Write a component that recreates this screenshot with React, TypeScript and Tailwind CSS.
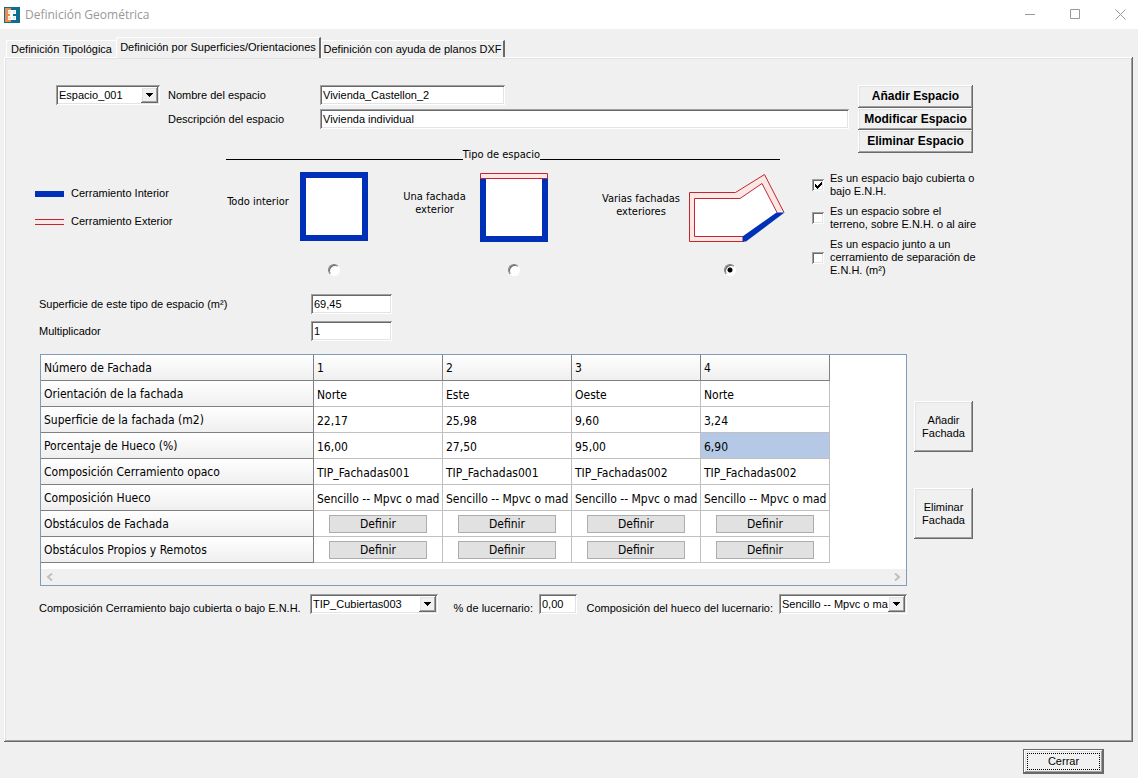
import React, { useState } from 'react';
import clsx from 'clsx';

const SUNKEN =
  'bg-white shadow-[inset_1px_1px_0_#a0a0a0,inset_-1px_-1px_0_#ffffff,inset_2px_2px_0_#696969,inset_-2px_-2px_0_#e3e3e3]';
const RAISED =
  'bg-[#f0f0f0] shadow-[inset_-1px_-1px_0_#696969,inset_1px_1px_0_#ffffff,inset_-2px_-2px_0_#a0a0a0,inset_2px_2px_0_#e3e3e3]';

const TABS = [
  { text: 'Definición Tipológica', width: 'w-[110px]' },
  { text: 'Definición por Superficies/Orientaciones', width: 'w-[205px]' },
  { text: 'Definición con ayuda de planos DXF', width: 'w-[184px]' },
];

const FACHADAS = ['1', '2', '3', '4'];

const ROWS: { label: string; values?: string[] }[] = [
  { label: 'Orientación de la fachada', values: ['Norte', 'Este', 'Oeste', 'Norte'] },
  { label: 'Superficie de la fachada (m2)', values: ['22,17', '25,98', '9,60', '3,24'] },
  { label: 'Porcentaje de Hueco (%)', values: ['16,00', '27,50', '95,00', '6,90'] },
  {
    label: 'Composición Cerramiento opaco',
    values: ['TIP_Fachadas001', 'TIP_Fachadas001', 'TIP_Fachadas002', 'TIP_Fachadas002'],
  },
  {
    label: 'Composición Hueco',
    values: ['Sencillo -- Mpvc o mad', 'Sencillo -- Mpvc o mad', 'Sencillo -- Mpvc o mad', 'Sencillo -- Mpvc o mad'],
  },
  { label: 'Obstáculos de Fachada' },
  { label: 'Obstáculos Propios y Remotos' },
];

const CONDICIONES = [
  { id: 'cubierta', text: 'Es un espacio bajo cubierta o\nbajo E.N.H.' },
  { id: 'terreno', text: 'Es un espacio sobre el\nterreno, sobre E.N.H. o al aire' },
  { id: 'junto', text: 'Es un espacio junto a un\ncerramiento de separación de\nE.N.H. (m²)' },
];

const AppIcon = () => (
  <svg width="16" height="16" viewBox="0 0 16 16" aria-hidden="true">
    <rect width="16" height="16" fill="#0f6e8e" />
    <path d="M1 1h6v14H1z" fill="#ee8a4e" />
    <path d="M4 3h8v4H9v2h3v4H4V9h2V7H4z" fill="#fff" />
    <path d="M4 4h3v2H4zM4 10h3v2H4z" fill="#fbe3d4" />
    <path d="M9 4h2v2H9zM9 10h2v2H9z" fill="#d9ecf2" />
  </svg>
);

const TitleBar = () => (
  <header className="flex h-[29px] items-center justify-between bg-white pl-1">
    <div className="flex items-center gap-[5px]">
      <AppIcon />
      <h1 className="font-['Open_Sans',sans-serif] text-[12px] leading-4 text-[#999999]">Definición Geométrica</h1>
    </div>
    <div className="flex gap-[9px] text-[#999999]">
      <button type="button" aria-label="Minimizar" className="flex h-[26px] w-9 items-center justify-center">
        <svg width="11" height="11" viewBox="0 0 11 11" fill="none" stroke="currentColor">
          <path d="M0 5.5h10" />
        </svg>
      </button>
      <button type="button" aria-label="Maximizar" className="flex h-[26px] w-9 items-center justify-center">
        <svg width="11" height="11" viewBox="0 0 11 11" fill="none" stroke="currentColor">
          <path d="M.5 .5h9v9h-9z" />
        </svg>
      </button>
      <button type="button" aria-label="Cerrar ventana" className="flex h-[26px] w-9 items-center justify-center">
        <svg width="11" height="11" viewBox="0 0 11 11" fill="none" stroke="currentColor">
          <path d="M.5 .5l10 10M10.5 .5l-10 10" />
        </svg>
      </button>
    </div>
  </header>
);

const TextField: React.FC<{ id: string; value: string; className: string }> = ({ id, value, className }) => (
  <input id={id} type="text" defaultValue={value} className={clsx('h-5 px-[3px] outline-none', SUNKEN, className)} />
);

const SelectField: React.FC<{ id: string; value: string; label?: string; className: string }> = ({
  id,
  value,
  label,
  className,
}) => (
  <div className={clsx('relative h-5', SUNKEN, className)}>
    <select
      id={id}
      aria-label={label}
      className="h-5 w-full appearance-none overflow-hidden bg-transparent pr-[19px] pl-[3px] outline-none"
    >
      <option>{value}</option>
    </select>
    <span
      className={clsx(
        'pointer-events-none absolute top-0.5 right-0.5 bottom-0.5 flex w-[17px] items-center justify-center',
        RAISED
      )}
    >
      <svg width="7" height="4" viewBox="0 0 7 4" shapeRendering="crispEdges">
        <path d="M0 0h7v1H0zM1 1h5v1H1zM2 2h3v1H2zM3 3h1v1H3z" />
      </svg>
    </span>
  </div>
);

const DatosEspacio = () => (
  <div className="grid grid-cols-[104px_144px_minmax(0,1fr)_115px] pl-[21px]">
    <SelectField id="espacio" value="Espacio_001" label="Espacio" className="w-[104px]" />
    <div className="flex flex-col gap-1 pl-2 leading-5">
      <label htmlFor="nombre">Nombre del espacio</label>
      <label htmlFor="descripcion">Descripción del espacio</label>
    </div>
    <div className="flex flex-col gap-1 pr-[9px] pl-4">
      <TextField id="nombre" value="Vivienda_Castellon_2" className="w-[185px]" />
      <TextField id="descripcion" value="Vivienda individual" className="w-full" />
    </div>
    <div className="row-span-2 flex flex-col text-[12px] font-bold">
      <button type="button" className={clsx('h-[23px]', RAISED)}>Añadir Espacio</button>
      <button type="button" className={clsx('h-[22px]', RAISED)}>Modificar Espacio</button>
      <button type="button" className={clsx('h-[23px]', RAISED)}>Eliminar Espacio</button>
    </div>
    <h2
      id="tipo-espacio"
      className="col-span-3 mt-[19px] flex items-end pr-[78px] pl-[170px] font-['DejaVu_Sans_Condensed',sans-serif] leading-[13px]"
    >
      <span className="mb-px h-px flex-1 bg-black" />
      Tipo de espacio
      <span className="mb-px h-px w-60 bg-black" />
    </h2>
  </div>
);

const Leyenda = () => (
  <ul className="flex w-[187px] flex-col gap-[15px] pt-[15px]">
    <li className="flex items-center gap-[7px]">
      <svg width="29" height="6" aria-hidden="true">
        <rect width="29" height="6" fill="#002fb8" />
      </svg>
      Cerramiento Interior
    </li>
    <li className="flex items-center gap-[7px]">
      <svg width="29" height="6" aria-hidden="true">
        <path d="M0 0h29v6H0z" fill="#f7e9e9" />
        <path d="M0 .5h29M0 5.5h29" stroke="#c1272d" />
      </svg>
      Cerramiento Exterior
    </li>
  </ul>
);

const DibujoInterior = () => (
  <svg width="68" height="70" viewBox="0 0 68 70" aria-hidden="true">
    <path d="M3 3h62v63H3z" fill="#fff" stroke="#002fb8" strokeWidth="6" />
  </svg>
);

const DibujoUnaFachada = () => (
  <svg width="68" height="70" viewBox="0 0 68 70" aria-hidden="true">
    <path d="M3 4v63h62V4" fill="#fff" stroke="#002fb8" strokeWidth="6" />
    <path d="M.5 1.5h67v5H.5z" fill="#fde6e6" stroke="#c1272d" />
  </svg>
);

const DibujoVariasFachadas = () => (
  <svg width="97" height="70" viewBox="0 0 97 70" aria-hidden="true">
    <path d="M.5 69.500v-49h46L75.500 2.500l19.500 38L55 69.500z" fill="#fde6e6" />
    <path d="M5.500 64.500v-38h45.500L73 11.500l15 29-34 24z" fill="#fff" />
    <path d="M55 69.500H.5v-49h46L75.500 2.500l19.500 38" fill="none" stroke="#c1272d" />
    <path d="M54 64.500H5.500v-38h45.500L73 11.500l15 29" fill="none" stroke="#c1272d" />
    <path d="M87.500 40.500h8L57 69.500h-3.500v-5z" fill="#002fb8" />
  </svg>
);

interface TipoProps {
  id: string;
  label: string;
  className?: string;
  labelClass: string;
  radioClass?: string;
  checked: boolean;
  onSelect: (id: string) => void;
  children: React.ReactNode;
}

const TipoEspacio: React.FC<TipoProps> = ({
  id,
  label,
  className,
  labelClass,
  radioClass,
  checked,
  onSelect,
  children,
}) => (
  <div className={clsx('grid grid-cols-[auto_auto] content-start gap-y-[22px]', className)}>
    <label
      htmlFor={id}
      className={clsx("self-center text-center font-['DejaVu_Sans_Condensed',sans-serif] leading-[13px]", labelClass)}
    >
      {label}
    </label>
    {children}
    <div className={clsx('col-start-2 flex justify-center', radioClass)}>
      <input
        id={id}
        type="radio"
        name="tipo"
        checked={checked}
        onChange={() => onSelect(id)}
        className="size-3 appearance-none rounded-full border border-t-[#808080] border-r-white border-b-white border-l-[#808080] bg-white shadow-[inset_1px_1px_0_#696969] checked:bg-[radial-gradient(circle,#000_2px,#fff_3px)]"
      />
    </div>
  </div>
);

const Condiciones = () => (
  <div className="flex w-[161px] flex-col gap-[7px]">
    {CONDICIONES.map((c, index) => (
      <div key={c.id} className="flex items-center gap-1.5">
        <span className="relative size-3 shrink-0">
          <input
            id={c.id}
            type="checkbox"
            defaultChecked={index === 0}
            className={clsx('peer block size-3 appearance-none', SUNKEN)}
          />
          <svg
            className="pointer-events-none absolute inset-0 hidden peer-checked:block"
            width="12"
            height="12"
            shapeRendering="crispEdges"
          >
            <path d="M3 5h1v3H3zM4 6h1v3H4zM5 7h1v3H5zM6 6h1v3H6zM7 5h1v3H7zM8 4h1v3H8zM9 3h1v3H9z" />
          </svg>
        </span>
        <label htmlFor={c.id} className="leading-[13px] whitespace-pre">{c.text}</label>
      </div>
    ))}
  </div>
);

const TablaFachadas = () => (
  <div className="min-w-0 flex-1 border border-[#7f9db9] bg-white font-['DejaVu_Sans_Condensed',sans-serif] text-[12px] leading-4">
    <table className="table-fixed border-separate border-spacing-0 text-left">
      <colgroup>
        <col className="w-[273px]" />
        {FACHADAS.map((n) => (
          <col key={n} className="w-[129px]" />
        ))}
      </colgroup>
      <thead>
        <tr>
          {['Número de Fachada', ...FACHADAS].map((text) => (
            <th
              key={text}
              scope="col"
              className="h-[26px] border-r border-b border-[#808080] bg-linear-to-b from-white to-[#efefef] p-0 pl-[3px] font-normal"
            >
              {text}
            </th>
          ))}
        </tr>
      </thead>
      <tbody>
        {ROWS.map((row) => (
          <tr key={row.label}>
            <th
              scope="row"
              className="h-[26px] border-r border-b border-[#808080] bg-linear-to-b from-white to-[#efefef] p-0 pl-[3px] font-normal"
            >
              {row.label}
            </th>
            {FACHADAS.map((n, i) => (
              <td
                key={n}
                className={clsx(
                  'h-[26px] border-r border-b border-[#c0c0c0] p-0 whitespace-nowrap',
                  row.values ? 'pt-0.5 pl-[3px]' : 'text-center',
                  row.values?.[i] === '6,90' && 'bg-[#b5c9e7]'
                )}
              >
                {row.values ? (
                  row.values[i]
                ) : (
                  <button
                    type="button"
                    aria-label={`Definir ${row.label} ${n}`}
                    className="mx-auto block h-[18px] w-[98px] border border-[#adadad] bg-[#e1e1e1]"
                  >
                    Definir
                  </button>
                )}
              </td>
            ))}
          </tr>
        ))}
      </tbody>
    </table>
    <div className="mt-1.5 flex h-4 items-center justify-between bg-[#f0f0f0] px-[5px]">
      <svg width="7" height="8" viewBox="0 0 7 8" fill="none" stroke="#bfbfbf" strokeWidth="2" aria-hidden="true">
        <path d="M6 .5L2 4l4 3.500" />
      </svg>
      <svg width="7" height="8" viewBox="0 0 7 8" fill="none" stroke="#bfbfbf" strokeWidth="2" aria-hidden="true">
        <path d="M1 .5L5 4 1 7.500" />
      </svg>
    </div>
  </div>
);

const App = () => {
  const [tab, setTab] = useState(1);
  const [tipo, setTipo] = useState('varias');

  return (
    <div className="flex min-h-screen flex-col bg-[#f0f0f0] font-['Liberation_Sans',Arial,sans-serif] text-[11px] leading-[13px] text-black">
      <TitleBar />

      <main className="flex flex-1 flex-col pt-2 pr-[5px] pl-1">
        <div role="tablist" className="flex items-end pl-0.5">
          {TABS.map(({ text, width }, index) => (
            <button
              key={text}
              type="button"
              role="tab"
              aria-selected={tab === index}
              onClick={() => setTab(index)}
              className={clsx(
                'border-t border-l border-white bg-[#f0f0f0] whitespace-nowrap',
                width,
                tab === index ? 'relative z-10 -mb-px h-[21px] border-r-2 border-r-[#696969] pb-0.5' : 'h-[17px]',
                index === TABS.length - 1 && 'border-r-2 border-r-[#696969]'
              )}
            >
              {text}
            </button>
          ))}
        </div>

        <section className={clsx('flex-1 pt-7 pb-6 pl-[31px]', RAISED)}>
          <div className="w-full max-w-[938px]">
            <DatosEspacio />

            <div className="flex justify-between pt-[11px]">
              <Leyenda />
              <div role="radiogroup" aria-labelledby="tipo-espacio" className="flex flex-1 justify-between pr-[26px]">
                <TipoEspacio
                  id="interior"
                  label="Todo interior"
                  labelClass="w-[78px] pr-1.5 pb-3"
                  checked={tipo === 'interior'}
                  onSelect={setTipo}
                >
                  <DibujoInterior />
                </TipoEspacio>
                <TipoEspacio
                  id="una"
                  label="Una fachada exterior"
                  className="mr-7"
                  labelClass="w-[90px] pb-2"
                  checked={tipo === 'una'}
                  onSelect={setTipo}
                >
                  <DibujoUnaFachada />
                </TipoEspacio>
                <TipoEspacio
                  id="varias"
                  label="Varias fachadas exteriores"
                  labelClass="w-[92px] pr-1 pb-1"
                  radioClass="pr-4"
                  checked={tipo === 'varias'}
                  onSelect={setTipo}
                >
                  <DibujoVariasFachadas />
                </TipoEspacio>
              </div>
              <Condiciones />
            </div>

            <div className="grid grid-cols-[272px_81px] items-center gap-y-[7px] pt-[17px] pl-1">
              <label htmlFor="superficie">Superficie de este tipo de espacio (m²)</label>
              <TextField id="superficie" value="69,45" className="w-full" />
              <label htmlFor="multiplicador">Multiplicador</label>
              <TextField id="multiplicador" value="1" className="w-full" />
            </div>

            <div className="flex items-center gap-[7px] pt-[13px] pl-[5px]">
              <TablaFachadas />
              <div className="flex w-[59px] flex-col gap-9 leading-[13px]">
                <button type="button" className={clsx('h-[51px] px-1.5', RAISED)}>Añadir Fachada</button>
                <button type="button" className={clsx('h-[51px] px-1.5', RAISED)}>Eliminar Fachada</button>
              </div>
            </div>

            <div className="flex items-end justify-between pt-2 pr-[66px] pl-1 leading-[11px]">
              <div className="flex items-end">
                <label htmlFor="cerramiento" className="w-[271px]">
                  Composición Cerramiento bajo cubierta o bajo E.N.H.
                </label>
                <SelectField id="cerramiento" value="TIP_Cubiertas003" className="w-32" />
              </div>
              <div className="flex items-end gap-1.5 pl-1.5">
                <label htmlFor="lucernario">% de lucernario:</label>
                <TextField id="lucernario" value="0,00" className="w-[38px]" />
              </div>
              <div className="flex items-end gap-1.5">
                <label htmlFor="hueco">Composición del hueco del lucernario:</label>
                <SelectField id="hueco" value="Sencillo -- Mpvc o mad" className="w-32" />
              </div>
            </div>
          </div>
        </section>
      </main>

      <footer className="flex justify-end pt-[7px] pr-[34px] pb-1">
        <button
          type="button"
          className="h-[25px] w-[81px] border border-[#696969] bg-[#f0f0f0] p-[3px] shadow-[inset_-1px_-1px_0_#696969,inset_1px_1px_0_#ffffff,inset_-2px_-2px_0_#a0a0a0,inset_2px_2px_0_#e3e3e3]"
        >
          <span className="flex h-full items-center justify-center border border-dotted border-black">Cerrar</span>
        </button>
      </footer>
    </div>
  );
};

export default App;
